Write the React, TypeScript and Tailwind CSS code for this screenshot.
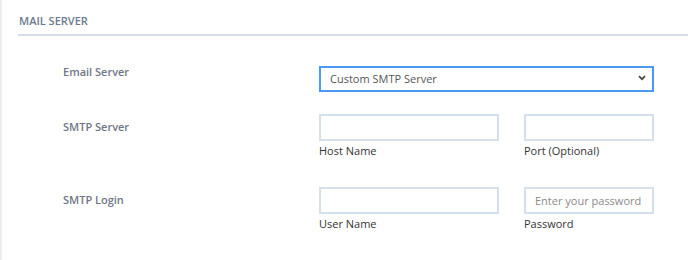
import React from "react";

function Field({ label, placeholder, width }: { label: string; placeholder?: string; width: string }) {
  return (
    <div className="flex flex-col">
      <input
        className={`${width} h-[27px] border-2 border-[#d6e0ec] bg-white px-[9px] text-[11px] text-[#444] outline-none placeholder:text-[#8a8a8a]`}
        placeholder={placeholder}
      />
      <span className="mt-[1px] text-[11px] leading-[18px] text-[#333]">{label}</span>
    </div>
  );
}

export default function App() {
  return (
    <div
      className="flex h-[260px] w-[688px] overflow-hidden bg-white"
      style={{ fontFamily: '"Open Sans", "Noto Sans", sans-serif' }}
    >
      <div className="w-[2px] shrink-0 bg-[#eeeeee]" />
      <div className="flex-1 pl-[16px]">
        <div className="border-b-2 border-[#d5dde9] pl-[1px] pt-[13px] pb-[5px]">
          <h2 className="text-[11px] font-semibold leading-[16px] text-[#6b7a90]">MAIL SERVER</h2>
        </div>

        <div className="pl-[45px]">
          <div className="mt-[29px] flex items-start">
            <div className="-mt-[2px] w-[256px] text-[11px] font-semibold leading-[18px] text-[#6e7686]">
              Email Server
            </div>
            <div className="relative">
              <select className="h-[26px] w-[335px] appearance-none border-2 border-[#4a9af5] bg-white pl-[9px] text-[11px] text-[#555] outline-none">
                <option>Custom SMTP Server</option>
              </select>
              <svg
                className="pointer-events-none absolute right-[8px] top-[10px]"
                width="8"
                height="6"
                viewBox="0 0 8 6"
                fill="none"
              >
                <path d="M1 1.2l3 3 3-3" stroke="#444" strokeWidth="1.7" />
              </svg>
            </div>
          </div>

          <div className="mt-[22px] flex items-start">
            <div className="w-[256px] pt-[4px] text-[11px] font-semibold leading-[18px] text-[#6e7686]">
              SMTP Server
            </div>
            <div className="flex gap-[25px]">
              <Field label="Host Name" width="w-[180px]" />
              <Field label="Port (Optional)" width="w-[130px]" />
            </div>
          </div>

          <div className="mt-[27px] flex items-start">
            <div className="w-[256px] pt-[4px] text-[11px] font-semibold leading-[18px] text-[#6e7686]">
              SMTP Login
            </div>
            <div className="flex gap-[25px]">
              <Field label="User Name" width="w-[180px]" />
              <Field label="Password" width="w-[130px]" placeholder="Enter your password" />
            </div>
          </div>
        </div>
      </div>
    </div>
  );
}
